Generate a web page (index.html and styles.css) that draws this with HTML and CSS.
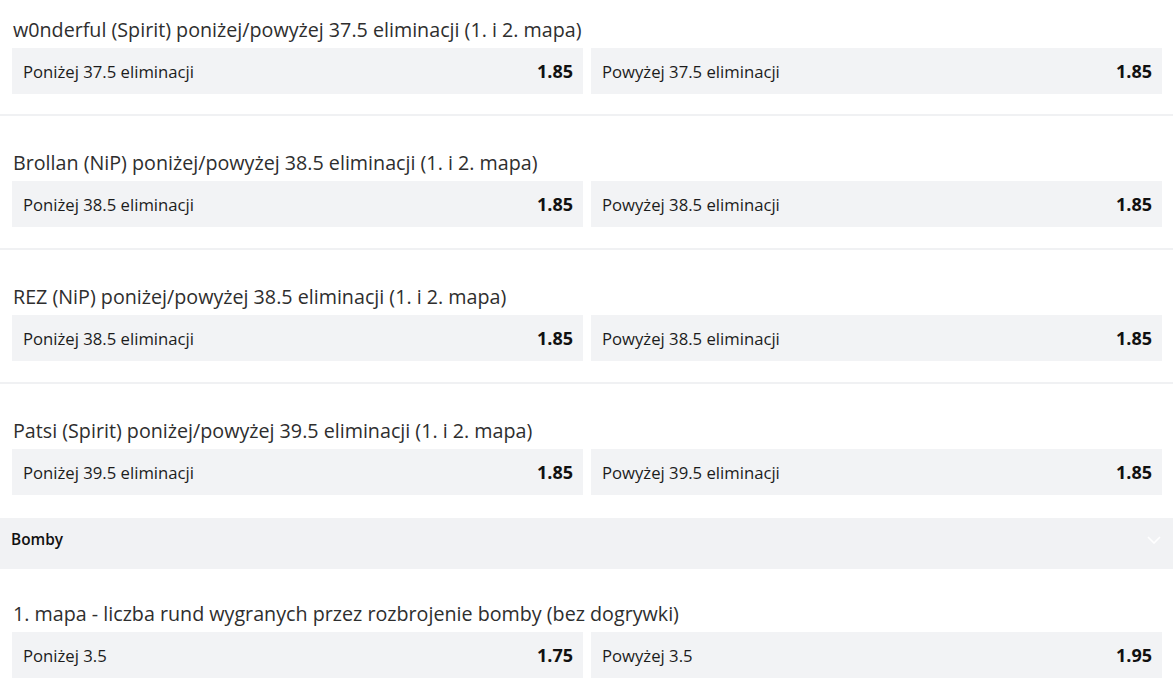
FILE: index.html
```html
<!DOCTYPE html>
<html lang="pl">
<head>
<meta charset="utf-8">
<title>Zakłady</title>
<link rel="stylesheet" href="styles.css">
</head>
<body>
<div class="page">
  <section class="market first">
    <h3 class="market-title">w0nderful (Spirit) poniżej/powyżej 37.5 eliminacji (1. i 2. mapa)</h3>
    <div class="odds-row">
      <div class="odd"><span class="label">Poniżej 37.5 eliminacji</span><span class="price">1.85</span></div>
      <div class="odd"><span class="label">Powyżej 37.5 eliminacji</span><span class="price">1.85</span></div>
    </div>
  </section>
  <section class="market">
    <h3 class="market-title">Brollan (NiP) poniżej/powyżej 38.5 eliminacji (1. i 2. mapa)</h3>
    <div class="odds-row">
      <div class="odd"><span class="label">Poniżej 38.5 eliminacji</span><span class="price">1.85</span></div>
      <div class="odd"><span class="label">Powyżej 38.5 eliminacji</span><span class="price">1.85</span></div>
    </div>
  </section>
  <section class="market">
    <h3 class="market-title">REZ (NiP) poniżej/powyżej 38.5 eliminacji (1. i 2. mapa)</h3>
    <div class="odds-row">
      <div class="odd"><span class="label">Poniżej 38.5 eliminacji</span><span class="price">1.85</span></div>
      <div class="odd"><span class="label">Powyżej 38.5 eliminacji</span><span class="price">1.85</span></div>
    </div>
  </section>
  <section class="market last">
    <h3 class="market-title">Patsi (Spirit) poniżej/powyżej 39.5 eliminacji (1. i 2. mapa)</h3>
    <div class="odds-row">
      <div class="odd"><span class="label">Poniżej 39.5 eliminacji</span><span class="price">1.85</span></div>
      <div class="odd"><span class="label">Powyżej 39.5 eliminacji</span><span class="price">1.85</span></div>
    </div>
  </section>
  <div class="group-header">
    <span class="group-name">Bomby</span>
    <svg class="chevron" width="14" height="8" viewBox="0 0 14 8"><path d="M1 1l6 6 6-6" fill="none" stroke="#ffffff" stroke-width="1.6"/></svg>
  </div>
  <section class="market after-group">
    <h3 class="market-title">1. mapa - liczba rund wygranych przez rozbrojenie bomby (bez dogrywki)</h3>
    <div class="odds-row">
      <div class="odd"><span class="label">Poniżej 3.5</span><span class="price">1.75</span></div>
      <div class="odd"><span class="label">Powyżej 3.5</span><span class="price">1.95</span></div>
    </div>
  </section>
</div>
</body>
</html>
```

FILE: styles.css
```css
html, body {
  margin: 0;
  padding: 0;
  background: #ffffff;
}
body {
  font-family: "Open Sans", "Noto Sans", sans-serif;
  color: #222;
  overflow: hidden;
}
.page {
  width: 1173px;
}
.market {
  padding: 34px 11px 21px 12px;
  border-bottom: 2px solid #f0f1f3;
}
.market.first {
  padding-top: 17px;
  padding-bottom: 20px;
}
.market.last {
  border-bottom: none;
  padding-bottom: 23px;
}
.market.after-group {
  border-bottom: none;
  padding-top: 32px;
}
.market-title {
  margin: 0 0 5px 1px;
  font-size: 19.7px;
  font-weight: 400;
  line-height: 26px;
  color: #2e2e2e;
}
.odds-row {
  display: grid;
  grid-template-columns: 1fr 1fr;
  gap: 8px;
}
.odd {
  height: 46px;
  background: #f2f3f5;
  display: flex;
  align-items: center;
  justify-content: space-between;
  padding: 0 10px 0 11px;
}
.label {
  font-size: 16.7px;
  color: #1c1c1c;
}
.price {
  font-size: 18px;
  font-weight: 700;
  color: #111;
}
.group-header {
  box-sizing: border-box;
  height: 51px;
  background: #f1f2f4;
  display: flex;
  align-items: center;
  justify-content: space-between;
  padding: 0 12px 9px 11px;
}
.group-name {
  font-size: 15.4px;
  font-weight: 600;
  color: #111;
}
.chevron {
  display: block;
  margin-top: 2px;
}
```
